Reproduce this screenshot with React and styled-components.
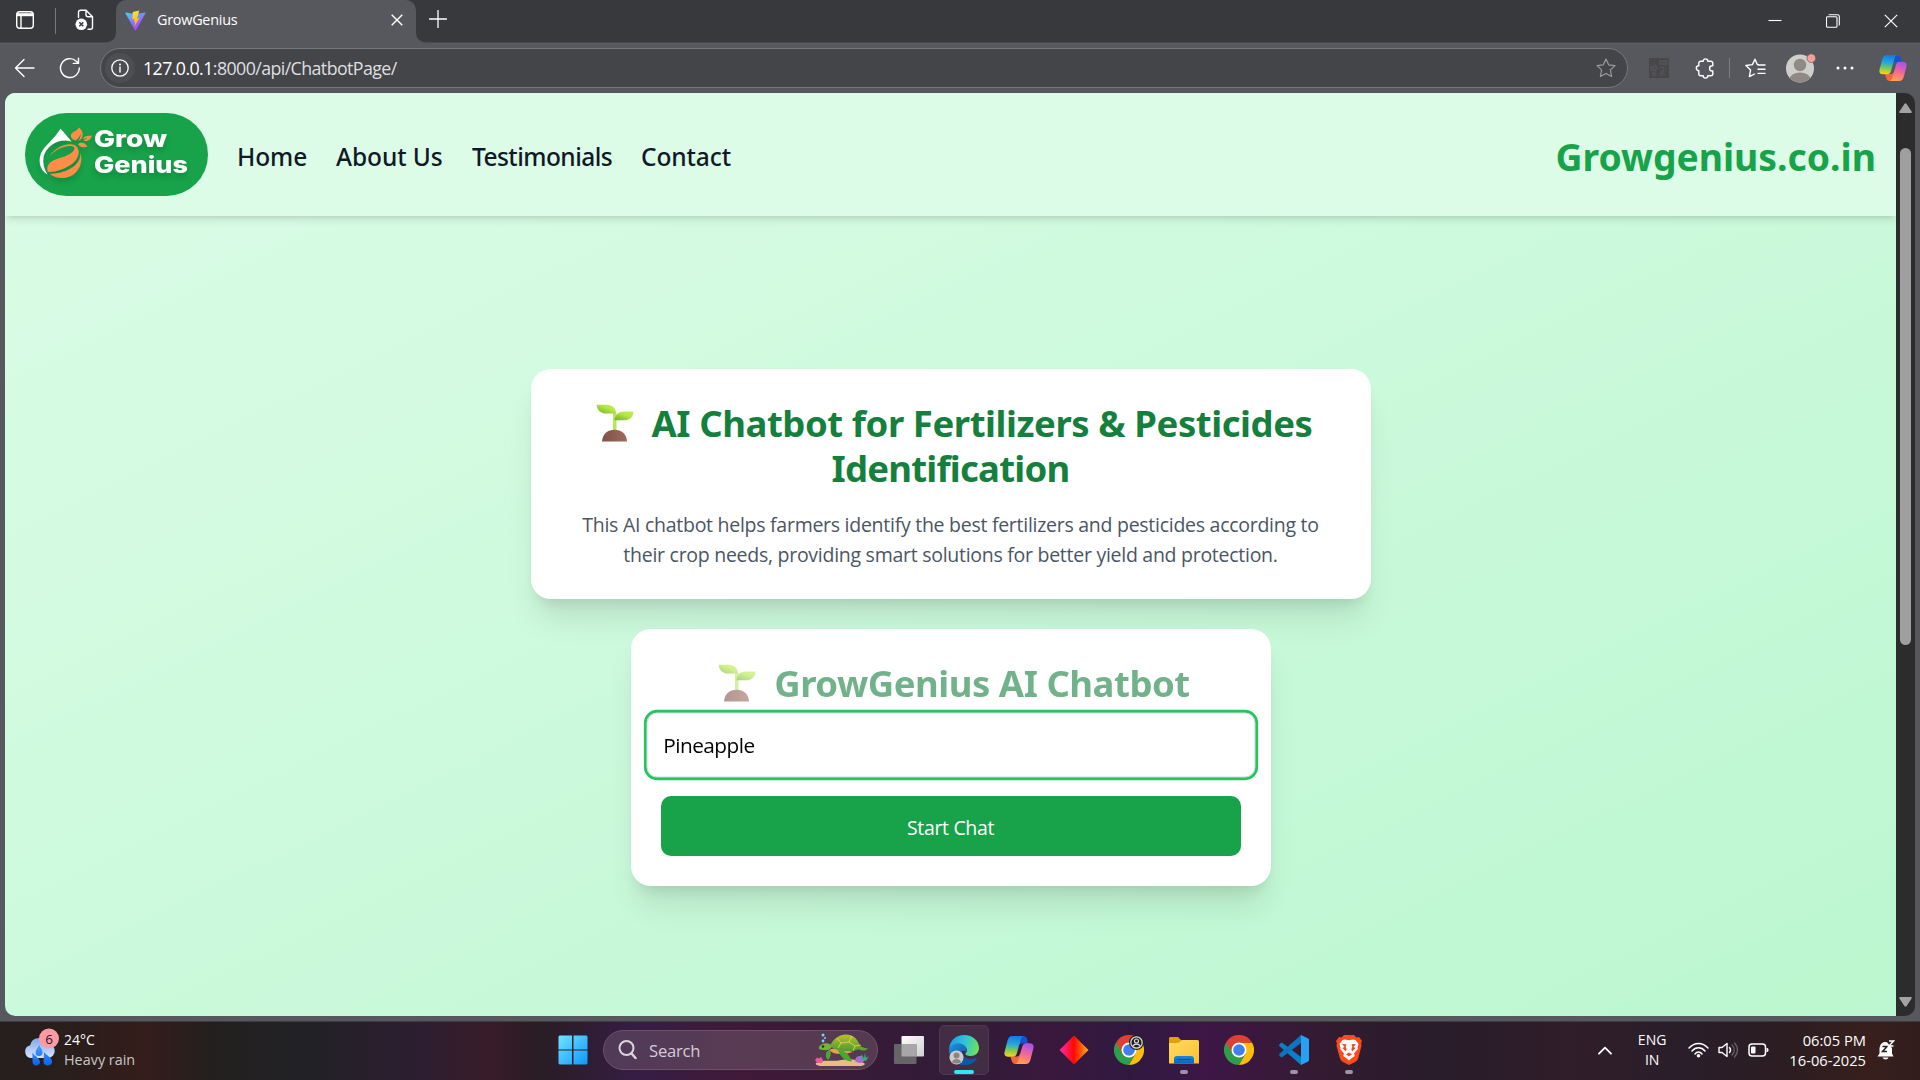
import React from "react";
import styled, { createGlobalStyle } from "styled-components";

const Global = createGlobalStyle`
  *, *::before, *::after { box-sizing: border-box; }
  html, body { margin: 0; padding: 0; background: #57585d; overflow: hidden; }
  body { font-family: "Open Sans", "Noto Sans", sans-serif; }
  svg { display: block; flex: none; }
`;

const Screen = styled.div`
  width: 1920px;
  height: 1080px;
  display: flex;
  flex-direction: column;
  overflow: hidden;
  background: #57585d;
`;

/* ---------- browser chrome ---------- */
const TabBar = styled.div`
  height: 43px;
  flex: none;
  display: flex;
  background: #38393d;
`;
const ToolsRule = styled.div`
  width: 1px;
  height: 26px;
  margin: 2px 19px 0 20px;
  background: #77787b;
`;
const ToolsGroup = styled.div`
  width: 116px;
  display: flex;
  align-items: center;
  padding: 0 0 2px 15px;
`;
const NewTab = styled.div`
  margin: 0 0 4px 13px;
`;
const Tab = styled.div`
  width: 300px;
  height: 43px;
  display: flex;
  align-items: center;
  padding: 0 13px 3px 9px;
  background: #57585d;
  border-radius: 10px 10px 0 0;
`;
const TabTitle = styled.div`
  flex: 1;
  margin: 0 0 2px 11px;
  font-size: 14.4px;
  letter-spacing: -0.25px;
  color: #fff;
`;
const TabUnder = styled.div`
  flex: ${(p) => (p.$grow ? 1 : "none")};
  background: #57585d;
  display: flex;
`;
const TabUnderInner = styled.div`
  flex: 1;
  display: flex;
  align-items: center;
  background: #38393d;
  border-bottom: 1px solid #4b4c50;
  border-bottom-left-radius: ${(p) => (p.$left ? "10px" : 0)};
  border-bottom-right-radius: ${(p) => (p.$left ? 0 : "10px")};
`;
const WindowButtons = styled.div`
  margin-left: auto;
  display: flex;
  align-items: center;
  gap: 44px;
  padding: 0 22px 0 0;
`;
const AddressRow = styled.div`
  height: 50px;
  flex: none;
  display: flex;
  align-items: center;
  padding: 0 13px 0 14px;
`;
const NavIcons = styled.div`
  display: flex;
  gap: 23px;
  margin-right: 19px;
`;
const AddressField = styled.div`
  width: 1528px;
  height: 40px;
  flex: none;
  display: flex;
  align-items: center;
  padding: 0 11px 0 4px;
  border: 1px solid #77787c;
  border-radius: 20px;
  background: #444549;
`;
const InfoDisc = styled.div`
  width: 30px;
  height: 30px;
  border-radius: 50%;
  display: grid;
  place-items: center;
  background: #4d4e52;
`;
const Url = styled.div`
  flex: 1;
  margin: 0 0 1px 8px;
  font-size: 17.8px;
  letter-spacing: -0.58px;
  color: #dfdfe0;
  b { font-weight: 400; color: #fff; }
`;
const ToolSlot = styled.div`
  margin-left: ${(p) => p.$ml}px;
`;
const ToolRule = styled.div`
  width: 1px;
  height: 20px;
  background: #7c7d80;
`;

/* ---------- page ---------- */
const Viewport = styled.div`
  height: 923px;
  flex: none;
  display: flex;
  margin: 0 5px 5px;
  border-radius: 10px;
  overflow: hidden;
  background: #2c2c2c;
`;
const Page = styled.div`
  width: 1891px;
  display: flex;
  flex-direction: column;
  background: linear-gradient(to bottom right, #dcfce7, #bbf7d0);
`;
const Header = styled.header`
  height: 123px;
  flex: none;
  display: flex;
  align-items: center;
  padding: 0 20px;
  background: #dcfce7;
  box-shadow: 0 5px 7.5px -1px rgba(0, 0, 0, 0.1), 0 2.5px 5px -2.5px rgba(0, 0, 0, 0.1);
`;
const LogoPill = styled.div`
  width: 183px;
  height: 83px;
  border-radius: 41.5px;
  background: #18a34a;
`;
const Nav = styled.nav`
  display: flex;
  gap: 30px;
  margin-left: 29px;
  padding-top: 3px;
`;
const NavLink = styled.a`
  width: ${(p) => p.$w}px;
  white-space: nowrap;
  font: 500 24.5px/35px "Noto Sans", sans-serif;
  letter-spacing: ${(p) => p.$ls || 0}px;
  color: #111827;
`;
const Brand = styled.div`
  margin-left: auto;
  padding-top: 4px;
  white-space: nowrap;
  font: 700 37.3px/45px "Noto Sans", sans-serif;
  color: #16a34a;
`;
const Main = styled.main`
  flex: 1;
  display: flex;
  flex-direction: column;
  align-items: center;
  gap: 30px;
  padding-top: 153px;
`;
const Card = styled.section`
  width: ${(p) => p.$w}px;
  padding: 30px;
  border-radius: 20px;
  background: #fff;
  text-align: center;
  box-shadow: 0 25px 31px -6px rgba(0, 0, 0, 0.1), 0 10px 12.5px -7.5px rgba(0, 0, 0, 0.1);
`;
const Title = styled.h1`
  margin: 0;
  font: 700 36.5px/45px "Noto Sans", sans-serif;
  white-space: nowrap;
  color: #15803d;
  opacity: ${(p) => (p.$faded ? 0.6 : 1)};
`;
const TitleLine = styled.span`
  height: 45px;
  display: flex;
  justify-content: center;
  align-items: center;
  gap: 18px;
  padding: 3px 0 0 ${(p) => (p.$icon ? 7 : 0)}px;
  letter-spacing: ${(p) => p.$ls}px;
`;
const Lead = styled.p`
  margin: 21px 0 -1px;
  font-size: 19.5px;
  line-height: 30px;
  letter-spacing: -0.27px;
  white-space: nowrap;
  color: #4b5563;
`;
const CropInput = styled.input`
  display: block;
  width: 580px;
  height: 62px;
  margin: 10px 0 20px;
  padding: 0 15px;
  border: 1px solid #d5d8dc;
  border-radius: 10px;
  outline: none;
  font: 400 19.8px "Open Sans", sans-serif;
  letter-spacing: -0.5px;
  color: #000;
  background: #fff;
  box-shadow: 0 0 0 2.5px #22c55e;
  transform: scale(1.05);
`;
const StartButton = styled.button`
  display: block;
  width: 580px;
  height: 60px;
  padding: 2px 0 0;
  border: 0;
  border-radius: 10px;
  font: 400 19.5px "Open Sans", sans-serif;
  letter-spacing: -0.34px;
  color: #fff;
  background: #18a34a;
`;
const Scrollbar = styled.div`
  width: 19px;
  display: flex;
  flex-direction: column;
  align-items: center;
  padding: 10px 0 9px;
`;
const Thumb = styled.div`
  width: 11px;
  height: 497px;
  margin: 35px 0 auto;
  border-radius: 6px;
  background: #9f9f9f;
`;

/* ---------- taskbar ---------- */
const Taskbar = styled.footer`
  height: 59px;
  flex: none;
  display: flex;
  align-items: center;
  padding-bottom: 2px;
  border-top: 1px solid #3f3b40;
  background: linear-gradient(90deg, #251f1d 0, #2a1e1c 80px, #351d1b 145px, #231f1e 210px, #222226 310px, #2d1e31 420px, #391c29 490px, #291d24 540px, #361d45 640px, #401a38 740px, #3a1a37 820px, #301c37 960px, #3a183d 1050px, #30193f 1130px, #3e1646 1210px, #331b31 1320px, #291c2b 1430px, #301e29 1570px, #2a1e2a 1680px, #2b1d22 1780px, #381f1d 1870px, #321d1d 1920px);
`;
const Weather = styled.div`
  width: 533px;
  display: flex;
  align-items: center;
  padding-left: 24px;
  gap: 5px;
`;
const WeatherBox = styled.div`
  margin-bottom: 7px;
`;
const Stack = styled.div`
  display: flex;
  flex-direction: column;
  align-items: ${(p) => p.$align || "flex-start"};
  font-size: ${(p) => p.$size || 14}px;
  line-height: 20px;
  white-space: nowrap;
  color: #fff;
`;
const Muted = styled.span`
  font-size: 14.4px;
  color: #c9c6c6;
`;
const AppRow = styled.div`
  display: flex;
  align-items: center;
`;
const StartSlot = styled.div`
  width: 62px;
  padding-left: 25px;
`;
const SearchBox = styled.div`
  width: 275px;
  height: 40px;
  margin: 0 3.5px 0 8px;
  display: flex;
  align-items: center;
  padding: 0 8px 0 14px;
  border: 1px solid #6d5269;
  border-radius: 20px;
  background: linear-gradient(90deg, #4f3a58, #5a3b54 50%, #553951);
`;
const SearchLabel = styled.div`
  flex: 1;
  margin-left: 12px;
  font-size: 16.6px;
  letter-spacing: -0.2px;
  color: #d5cbd5;
`;
const AppSlot = styled.div`
  width: 50px;
  height: 50px;
  margin: 0 2.5px;
  display: flex;
  flex-direction: column;
  align-items: center;
  padding-top: 9px;
  border-radius: 5px;
  border: 1px solid ${(p) => (p.$active ? "#4d3850" : "transparent")};
  background: ${(p) => (p.$active ? "#422d45" : "transparent")};
`;
const RunMark = styled.div`
  width: ${(p) => (p.$active ? 20 : 8)}px;
  height: 4px;
  margin-top: 5px;
  border-radius: 2px;
  background: ${(p) => (p.$active ? "#2de6f9" : "#a093a4")};
`;
const Tray = styled.div`
  flex: 1;
  display: flex;
  align-items: center;
  justify-content: flex-end;
  padding-right: 25px;
`;
const LangBox = styled.div`
  margin-left: 26px;
`;
const TrayIcons = styled.div`
  display: flex;
  align-items: center;
  gap: 9px;
  margin: 0 20px 0 22px;
`;
const ClockBox = styled.div`
  margin-right: 11px;
`;

/* ---------- drawings ---------- */
const line = { fill: "none", stroke: "#fff", strokeWidth: 1.4, strokeLinecap: "round", strokeLinejoin: "round" };

const WorkspaceIcon = () => (
  <svg width="20" height="20" viewBox="0 0 20 20">
    <rect x="1.700" y="1.700" width="16.600" height="16.600" rx="3" {...line} />
    <path d="M2 3.200h16v3H2z" fill="#fff" />
    <path d="M6 6V18" {...line} />
  </svg>
);
const TabActionsIcon = () => (
  <svg width="19" height="22" viewBox="0 0 19 22">
    <path d="M3.500 8.500V3.200a2 2 0 0 1 2-2H11l6.500 6.500v10.500a2 2 0 0 1-2 2H13" {...line} />
    <path d="M11 1.500v4.200a2 2 0 0 0 2 2h4.400" {...line} />
    <circle cx="6.300" cy="15.300" r="5.800" fill="#fff" />
    <path d="M4.300 13.300l4 4m0-4l-4 4" stroke="#38393d" strokeWidth="1.500" />
  </svg>
);
const ViteIcon = () => (
  <svg width="21" height="21" viewBox="0 0 21 21">
    <defs>
      <linearGradient id="vt" x1="0" y1="0" x2=".6" y2="1"><stop stopColor="#41d1ff" /><stop offset="1" stopColor="#bd34fe" /></linearGradient>
      <linearGradient id="vb" x1=".4" y1="0" x2=".6" y2="1"><stop stopColor="#ffea83" /><stop offset=".1" stopColor="#ffdd35" /><stop offset="1" stopColor="#ffa800" /></linearGradient>
    </defs>
    <path d="M20.400 3.400L11 20.200a.7.7 0 0 1-1 0L.5 3.400c-.3-.4.1-.9.6-.8l9.400 1.600 9.300-1.600c.5-.1.9.4.6.8z" fill="url(#vt)" />
    <path d="M14.300.6L7.800 1.900l-.5 7.300 2.200-.3-.6 3.200 1.300-.3-.8 4.800L14.600 8l-2.600.5.9-3.100z" fill="url(#vb)" />
  </svg>
);
const CloseIcon = ({ size = 12, w = 1.4 }) => (
  <svg width={size} height={size} viewBox="0 0 12 12"><path d="M.7.7l10.600 10.600M11.300.7L.7 11.300" stroke="#fff" strokeWidth={w} /></svg>
);
const PlusIcon = () => (
  <svg width="18" height="18" viewBox="0 0 18 18"><path d="M9 .5v17M.5 9h17" {...line} strokeWidth="1.300" /></svg>
);
const MinIcon = () => (<svg width="14" height="14" viewBox="0 0 14 14"><path d="M.5 6.500h13" stroke="#fff" strokeWidth="1.100" /></svg>);
const RestoreIcon = () => (
  <svg width="14" height="14" viewBox="0 0 14 14"><rect x=".5" y="2.800" width="10.500" height="10.500" rx="1" {...line} strokeWidth="1.100" /><path d="M3 .7h8.500a1.800 1.800 0 0 1 1.800 1.800V11" {...line} strokeWidth="1.100" /></svg>
);
const BackIcon = () => (<svg width="22" height="22" viewBox="0 0 22 22"><path d="M20 11H1.500M10 2.500L1.500 11l8.500 8.500" {...line} /></svg>);
const ReloadIcon = () => (<svg width="22" height="22" viewBox="0 0 22 22"><path d="M20.300 11a9.400 9.400 0 1 1-3-6.800l2 1.900M19.500 1.200v5.200h-5.200" {...line} /></svg>);
const InfoIcon = () => (<svg width="18" height="18" viewBox="0 0 18 18"><circle cx="9" cy="9" r="8.200" {...line} strokeWidth="1.300" /><path d="M9 8v5" {...line} /><circle cx="9" cy="5.400" r="1" fill="#fff" /></svg>);
const StarIcon = () => (<svg width="20" height="20" viewBox="0 0 20 20"><path d="M10 1l2.700 5.800 6.300.8-4.600 4.300 1.200 6.600L10 15.400l-5.600 3.100 1.200-6.600L1 7.600l6.300-.8z" {...line} stroke="#9b9b9d" strokeWidth="1.200" /></svg>);
const DimExtension = () => (
  <svg width="20" height="20" viewBox="0 0 20 20"><rect width="20" height="20" fill="#48484a" /><path d="M11 3h7v3h-7zM2 9h3v3H2zm4-2l2 3-2 3M3 14l4 4m0-4l-4 4M11 10c4-2 5 1 3 3s1 4 3 3m-5-3v5" fill="none" stroke="#555556" strokeWidth="1.300" /></svg>
);
const PuzzleIcon = () => (
  <svg width="19" height="21" viewBox="0 0 19 21"><path d="M5.800 3.200h2.400a2.300 2.300 0 0 1 4.600 0h3a2 2 0 0 1 2 2v2.600h-.6a2.600 2.600 0 0 0 0 5.200h.6v2.800a2 2 0 0 1-2 2h-3a2.300 2.300 0 0 1-4.600 0H5.800a2 2 0 0 1-2-2v-3a2.500 2.500 0 0 1 0-5V5.200a2 2 0 0 1 2-2z" {...line} /></svg>
);
const FavIcon = () => (
  <svg width="21" height="20" viewBox="0 0 21 20"><path d="M13.500 6.800L12.300 6.500 10 1.200 7.400 6.600.9 7.500l4.700 4.400-1.200 6.700 5-2.600M13.500 7h6.500M13 11.200h7M13 15.400h7" {...line} /></svg>
);
const Avatar = () => (
  <svg width="30" height="30" viewBox="0 0 30 30"><defs><clipPath id="av"><circle cx="14" cy="15.500" r="14" /></clipPath></defs><circle cx="14" cy="15.500" r="14" fill="#d0ceca" /><circle cx="14" cy="12" r="6.200" fill="#8f8a85" /><ellipse cx="14" cy="26.500" rx="10.500" ry="7" fill="#8f8a85" clipPath="url(#av)" /><circle cx="25.300" cy="5.200" r="4.300" fill="#ff9d9b" stroke="#68696c" strokeWidth=".8" /></svg>
);
const DotsIcon = () => (<svg width="18" height="4" viewBox="0 0 18 4"><g fill="#fff"><circle cx="2" cy="2" r="1.500" /><circle cx="9" cy="2" r="1.500" /><circle cx="16" cy="2" r="1.500" /></g></svg>);
const Copilot = ({ id, size = 28 }) => (
  <svg width={size} height={size} viewBox="0 0 28 28">
    <defs>
      <linearGradient id={id + "a"} x1=".4" y1="0" x2=".3" y2="1"><stop stopColor="#1778e8" /><stop offset=".4" stopColor="#25a9d8" /><stop offset=".7" stopColor="#83cb50" /><stop offset="1" stopColor="#ffd21c" /></linearGradient>
      <linearGradient id={id + "b"} x1=".7" y1="0" x2=".4" y2="1"><stop stopColor="#a452ef" /><stop offset=".5" stopColor="#f0669b" /><stop offset="1" stopColor="#ffa24b" /></linearGradient>
    </defs>
    <path d="M14 1h4c2 0 3 1 3.500 2.500L22.500 8H17c-2 0-3 1-3.500 3z" fill="#1554ce" />
    <path d="M14 27h-3.500c-1.600 0-2.700-1-3.200-2.500L6 20h6c1.600 0 2.500-1 3-3z" fill="#f26541" />
    <path d="M7.500 1H19c-1.800 0-2.800 1.200-3.400 3.200L12 17c-.7 2.300-1.800 3.300-3.800 3.300H4c-3 0-4.200-2-3.400-5L3.400 5C4.200 2.300 5.500 1 7.500 1z" fill={`url(#${id}a)`} />
    <path d="M20.500 27H10c1.700 0 2.700-1.200 3.300-3.200L17 11c.6-2.200 1.700-3.300 3.700-3.300H24c3 0 4.200 2 3.400 5L24.700 23c-.8 2.800-2.200 4-4.200 4z" fill={`url(#${id}b)`} />
  </svg>
);
const Logo = () => (
  <svg width="183" height="83" viewBox="0 0 183 83">
    <defs><filter id="ls" x="-20%" y="-20%" width="140%" height="150%"><feDropShadow dx="0" dy="4" stdDeviation="3" floodColor="#0a5c28" floodOpacity=".35" /></filter></defs>
    <g filter="url(#ls)">
      <path d="M35.500 15.500L46.500 28.500C34 24.500 21 33 18.500 44c-1 6 .5 12 4 17.500C14 57 12.500 45 17.500 37.500 21 32 30 25 35.500 15.500z" fill="#fff" />
      <path d="M49.500 36C46 44 33 44 26 49c-3.500 2.500-4.500 6-3 10 10 0 22-5 27-11 3-3.500 4.500-8 3-12-1-2.500-2.500-3.500-4-4C43 29.500 31 33.500 24.500 43c6-6.500 14-10 20-10 4 0 5.500 1 5 3z" fill="#ff8d47" />
      <path d="M55.500 40c.5 11-11 20-30.500 21C30 65 37 65.800 43 64c9-2.500 15.500-12 12.500-24z" fill="#ff8d47" />
      <path d="M54 14.500c4.500 3.500 5 9.500 1 12.500l-1.500.5c2-2.500 2.500-5 2-7-.5 3-2.500 5.500-5 7-3.500-1-5-3-4.500-5.500.5-3.500 6-3.500 8-7.500zM67 22.800c-2 4.700-5 6.200-8.500 4.700l4-2.500-4.800 1C59 23 62.500 22.300 67 22.800zM53 31c4-2.500 7-.5 9.500 2.500-3.500 1.500-7.500 1-9.500-2.500z" fill="#ff8d47" />
      <g fill="#fff" fontFamily="Inter, sans-serif" fontWeight="800" fontSize="22.500">
        <text x="69" y="34" textLength="73" lengthAdjust="spacingAndGlyphs">Grow</text>
        <text x="69" y="60.300" textLength="94" lengthAdjust="spacingAndGlyphs">Genius</text>
      </g>
    </g>
  </svg>
);
const Sprout = ({ id }) => (
  <svg width="38" height="38" viewBox="0 0 38 38">
    <defs>
      <linearGradient id={id + "l"} x1="0" y1="1" x2="1" y2="0"><stop stopColor="#6fae2c" /><stop offset=".6" stopColor="#b5e844" /><stop offset="1" stopColor="#bdf04b" /></linearGradient>
      <linearGradient id={id + "s"} x1="0" x2="1" y1="0" y2="0"><stop stopColor="#7f5148" /><stop offset="1" stopColor="#a06a60" /></linearGradient>
    </defs>
    <path d="M17 9h3.500v18H17z" fill="#b4ea55" />
    <path d="M.5.7H10c6 0 9.500 3.300 10.300 8.800H11C4.500 9.500 1.300 6.500.5.7z" fill={`url(#${id}l)`} />
    <path d="M37.500 7.500C37 13.500 33.500 16.300 28 16.300h-9.500c.5-5.800 4-8.800 10-8.800z" fill={`url(#${id}l)`} />
    <path d="M6 37.500C6.500 30 11.500 25.700 18.500 25.700S30.700 30 31 37.500z" fill={`url(#${id}s)`} />
  </svg>
);
const Arrow = ({ down }) => (
  <svg width="13" height="10" viewBox="0 0 13 10"><path d={down ? "M1.200 0h10.600c1 0 1.300.8.8 1.500L7.600 9c-.6.9-1.600.9-2.200 0L.4 1.500C-.1.8.2 0 1.200 0z" : "M1.200 10h10.600c1 0 1.300-.8.8-1.500L7.600 1c-.6-.9-1.600-.9-2.200 0L.4 8.500c-.5.7-.2 1.500.8 1.500z"} fill="#a3a3a3" /></svg>
);
const WeatherIcon = () => (
  <svg width="35" height="38" viewBox="0 0 35 38">
    <defs>
      <linearGradient id="wc" x1="0" y1="0" x2="0" y2="1"><stop stopColor="#7fa8ee" /><stop offset="1" stopColor="#d9e4fb" /></linearGradient>
      <linearGradient id="wd" x1="0" y1="0" x2="0" y2="1"><stop stopColor="#48a0ff" /><stop offset="1" stopColor="#0a62ee" /></linearGradient>
    </defs>
    <path d="M7 30a6.500 6.500 0 0 1-.8-12.800A9 9 0 0 1 23.500 16a7 7 0 0 1 .5 14z" fill="url(#wc)" />
    <path d="M15 17c2.400 4 3.700 5.500 3.500 7.500a3.500 3.500 0 0 1-7 0c0-2 2-4 3.500-7.500zM8.500 24.500c2 3.500 7.500 6 7.500 9.500 0 4.500-7.500 4.500-7.500 0zM20 24c3 4 9 6 8 10.500-.8 4-8 4-8.500 0z" fill="url(#wd)" />
    <circle cx="25" cy="10.500" r="10" fill="#ff99a4" />
    <text x="25" y="15.500" textAnchor="middle" fontFamily="Open Sans, sans-serif" fontSize="13.500" fill="#1b1a1a">6</text>
  </svg>
);
const Windows = () => (
  <svg width="30" height="30" viewBox="0 0 30 30"><defs><linearGradient id="wn" gradientUnits="userSpaceOnUse" x1="0" y1="0" x2="30" y2="30"><stop stopColor="#70e7ff" /><stop offset="1" stopColor="#0f94fb" /></linearGradient></defs><path d="M1.500.5h12.500v14H.5v-13zM15.500.5h13l1 1v13h-14zM.5 15.500h13.500v14H1.500l-1-1zM15.500 15.500h14v13l-1 1h-13z" fill="url(#wn)" /></svg>
);
const SearchIcon = () => (<svg width="19" height="20" viewBox="0 0 19 20"><circle cx="8.500" cy="8" r="7" fill="none" stroke="#ddd3dd" strokeWidth="2" /><path d="M13.500 13.500l4 4.500" stroke="#ddd3dd" strokeWidth="2.500" strokeLinecap="round" /></svg>);
const Turtle = () => (
  <svg width="55" height="34" viewBox="0 0 55 34">
    <defs><linearGradient id="tt" x1="0" y1="0" x2="0" y2="1"><stop stopColor="#b9bf2e" /><stop offset="1" stopColor="#4d9b32" /></linearGradient></defs>
    <path d="M2 30c8-4 15-1 25-3s16 0 23 3c2 1 0 3-5 3H8c-5 0-7-2-6-3z" fill="#e8bd83" />
    <path d="M43 12c4 1 6 3 11 3.500-3 3.500-8 2-12-.5z" fill="#58a82f" />
    <path d="M15 17c8-4 16 0 24 2l-8 2c-8 0-12 0-16-4z" fill="#e6a24a" />
    <path d="M16 13C20 4 28 0 36 2c7 2 9 8 11 13-8 5-24 4-31-2z" fill="url(#tt)" />
    <path d="M23 5l4 5 8-1 3-6M27 10l-3 5M35 9l6 4-2 5M41 13l6-1" stroke="#dfd64d" strokeWidth=".9" fill="none" />
    <path d="M5 14c2-4 9-5 12-2 2 3-2 6-7 5-4 0-6-1-5-3z" fill="#76b238" /><circle cx="9" cy="13.500" r="1.200" fill="#18370f" />
    <path d="M24 17c8 0 12 6 14 11.500-6 0-12-4.500-14-11.500zM15 17c3 2 2 7-1 10-3-3-3-8 1-10z" fill="#48a832" />
    <g fill="#7ed2ee"><circle cx="9" cy="2" r="1.500" /><circle cx="11" cy="5" r="1" /><circle cx="9" cy="8" r="1.400" /></g>
    <path d="M1 27l2-2.500 2 1 2-1.500 2 3-1 3H3z" fill="#ee569f" /><path d="M41 28c0-4 3-5 5-5s5 2 4 5-8 2-9 0z" fill="#a86bd0" /><path d="M48 27l-1-6 3 4 1-5 1 5 3-2-3 5z" fill="#2fae81" />
  </svg>
);
const TaskView = () => (
  <svg width="30" height="30" viewBox="0 0 30 30"><defs><linearGradient id="tv" x1="0" y1="0" x2="1" y2="1"><stop stopColor="#fff" /><stop offset="1" stopColor="#cfcfcf" /></linearGradient></defs><rect x="7.500" y="1" width="22.500" height="20.500" rx="1" fill="url(#tv)" /><rect x="0" y="9" width="22.500" height="20" rx="1" fill="#666467" /><rect x="7.500" y="9" width="15" height="12.500" fill="#a7a6a8" /></svg>
);
const Edge = () => (
  <svg width="30" height="30" viewBox="0 0 30 30">
    <defs>
      <linearGradient id="eg" x1="0" y1=".4" x2="1" y2=".6"><stop stopColor="#1c9ee8" /><stop offset=".5" stopColor="#31c4d6" /><stop offset="1" stopColor="#6de554" /></linearGradient>
      <linearGradient id="eb" x1="0" y1="0" x2="1" y2="1"><stop stopColor="#2194e0" /><stop offset="1" stopColor="#0c4ea5" /></linearGradient>
    </defs>
    <path d="M0 14c1 9 7 16 16 16 5 0 9-2 11.500-5.500.6-1-.3-1.600-1.200-1.200-6 2.600-12 0-13-5L13 9z" fill="#0c59a4" />
    <path d="M0 14C2 8 8 7 12 8c5 1 7 5 5 8-2 1-4-1-5 1-1 4 2 9 6 12C8 32 0 25 0 14z" fill="url(#eb)" />
    <path d="M0 14C1 5 7 0 15 0c9 0 15 6 15 13 0 5-4 8-8 8-4 0-6-1-5.500-2.500C19 16 18 13 16 11 11 6 3 8 0 14z" fill="url(#eg)" />
    <circle cx="7.500" cy="22.500" r="7" fill="#cfccc8" /><circle cx="7.500" cy="20.500" r="3" fill="#8a8580" /><path d="M3 27c1-4 8-4 9 0-2 2-7 2-9 0z" fill="#8a8580" />
  </svg>
);
const Diamond = () => (
  <svg width="30" height="30" viewBox="0 0 30 30"><defs><linearGradient id="dm" x1="0" x2="1" y1="0" y2="0"><stop stopColor="#ff2bb0" /><stop offset=".5" stopColor="#ff0800" /><stop offset="1" stopColor="#ffb01a" /></linearGradient></defs><path d="M15 .5L29.500 15 15 29.500.5 15z" fill="url(#dm)" /></svg>
);
const Chrome = ({ badge }) => (
  <svg width="30" height="30" viewBox="0 0 30 30">
    <path d="M15 15H13L2 7.500A15 15 0 0 0 15 30l6.500-11.300z" fill="#2d9e4b" />
    <path d="M15 7.500h13A15 15 0 0 1 15 30l6.500-11.300z" fill="#fbbc0e" />
    <path d="M15 7.500h13A15 15 0 0 0 2 7.500l6.500 11.200z" fill="#dc4133" />
    <circle cx="15" cy="15" r="7.500" fill="#fff" /><circle cx="15" cy="15" r="5.800" fill="#3f7fee" />
    {badge && <g><circle cx="22.500" cy="7.500" r="7.500" fill="#222" /><circle cx="22.500" cy="7.500" r="5.700" fill="none" stroke="#ddd" strokeWidth="1.200" /><circle cx="22.500" cy="6" r="2" fill="none" stroke="#ddd" strokeWidth="1.100" /><path d="M19 11c1-2.500 6-2.500 7 0" fill="none" stroke="#ddd" strokeWidth="1.200" /></g>}
  </svg>
);
const Folder = () => (
  <svg width="30" height="30" viewBox="0 0 30 30"><defs><linearGradient id="fo" x1="0" y1="0" x2="1" y2="1"><stop stopColor="#ffdb63" /><stop offset="1" stopColor="#fbc02f" /></linearGradient><linearGradient id="fb" x1="0" y1="0" x2="0" y2="1"><stop stopColor="#1588dd" /><stop offset="1" stopColor="#0a64bd" /></linearGradient></defs><path d="M0 3.500C0 2.500.7 2 1.500 2H9l3 3h16v8H0z" fill="#e2a20c" /><path d="M0 8h9.500L13 5h15.500A1.500 1.500 0 0 1 30 6.500v22H0z" fill="url(#fo)" /><path d="M5 28.500V24a3 3 0 0 1 3-3h14a3 3 0 0 1 3 3v4.500z" fill="url(#fb)" /><path d="M8.500 24.500h13" stroke="#07529d" strokeWidth="1.200" strokeLinecap="round" /></svg>
);
const VSCode = () => (
  <svg width="30" height="30" viewBox="0 0 30 30">
    <path d="M22 30L.6 11.300c-.7-.6-.7-1.400 0-2l1.300-1.200c.5-.4 1.100-.4 1.600 0L24 23.500z" fill="#0b80c9" />
    <path d="M22 0L.6 18.700c-.7.6-.7 1.400 0 2l1.300 1.200c.5.4 1.100.4 1.600 0L24 6.500z" fill="#0f74c0" />
    <path d="M22 0l6.800 3.200c.8.400 1.200 1 1.200 1.800v20c0 .8-.4 1.400-1.200 1.800L22 30z" fill="#27a2f1" />
  </svg>
);
const Brave = () => (
  <svg width="26" height="30" viewBox="0 0 26 30"><path d="M8 0h10l2.500 2.500L23 2l3 4-1 2.500.6 2-3.500 13c-.5 1.600-1.500 2.600-3 3.500L13 30l-6-3c-1.500-.9-2.500-2-3-3.500L.4 10.500l.6-2L0 6l3-4 2.500.5z" fill="#fb4a1d" /><path d="M9 4.500l4 .8 4-.8 2.500.5 3 4-1 3.500.3 1.500-3.800 4.500.8 2.500-3 2L13 25.500 10.200 23l-3-2 .8-2.500L4.200 14l.3-1.500-1-3.500 3-4z" fill="#fff" /><path d="M6 9l4.500.2-.8 2.500 1 2.800-1.200 1.800L6.500 13l2-1zM20 9l-4.500.2.8 2.500-1 2.800 1.200 1.800 3-3.300-2-1zM13 17.500l-3 1.700 3 2.300 3-2.300z" fill="#f04a1d" /></svg>
);
const Chevron = () => (<svg width="14" height="9" viewBox="0 0 14 9"><path d="M1 7.700L7 1.700l6 6" {...line} strokeWidth="1.800" /></svg>);
const Wifi = () => (
  <svg width="21" height="16" viewBox="0 0 21 16"><path d="M1 6c5.500-6 13.500-6 19 0M4 9c3.700-4.300 9.300-4.300 13 0M7 12c2-2.600 5-2.600 7 0" {...line} strokeWidth="1.500" /><circle cx="10.500" cy="13.700" r="1.800" fill="#fff" /></svg>
);
const Volume = () => (
  <svg width="21" height="16" viewBox="0 0 21 16"><path d="M1 5.500h3l5-4v13l-5-4H1z" {...line} /><path d="M11.500 5.500c1.300 1.500 1.300 3.500 0 5" {...line} /><path d="M14 3c3 3 3 7 0 10M16.500 1c4 4 4 10 0 14" {...line} stroke="#695f64" /></svg>
);
const Battery = () => (
  <svg width="21" height="14" viewBox="0 0 21 14"><rect x="1" y="1" width="16.500" height="12" rx="3" {...line} strokeWidth="1.500" /><rect x="3" y="3.500" width="4.500" height="7" rx="1" fill="#fff" /><path d="M18.500 5h.8c1.600 0 1.600 4 0 4h-.8z" fill="#fff" /></svg>
);
const Bell = () => (
  <svg width="18" height="20" viewBox="0 0 18 20"><path d="M2.500 13.500V8a6 6 0 0 1 7.500-5.800L15 8v5.500l1.500 3H.5z" fill="#fff" /><path d="M5.500 17.500h6c-.8 2.500-5.200 2.500-6 0z" fill="#fff" /><path d="M5.500 6.500h4.500l-4.500 5H10" fill="none" stroke="#2c1d20" strokeWidth="1.500" /><path d="M12 1h4.500L12 6h4.500" fill="none" stroke="#fff" strokeWidth="1.500" /></svg>
);

const tools = [
  { ml: 21, icon: <DimExtension /> },
  { ml: 26, icon: <PuzzleIcon /> },
  { ml: 15, icon: <ToolRule /> },
  { ml: 15, icon: <FavIcon /> },
  { ml: 20, icon: <Avatar /> },
  { ml: 20, icon: <DotsIcon /> },
  { ml: 25, icon: <Copilot id="cb" /> },
];

const apps = [
  { icon: <TaskView /> },
  { icon: <Edge />, active: true, running: true },
  { icon: <Copilot id="ct" size={30} /> },
  { icon: <Diamond /> },
  { icon: <Chrome badge /> },
  { icon: <Folder />, running: true },
  { icon: <Chrome /> },
  { icon: <VSCode />, running: true },
  { icon: <Brave />, running: true },
];

export default function App() {
  return (
    <Screen>
      <Global />
      <TabBar>
        <TabUnder>
          <TabUnderInner>
            <ToolsGroup>
              <WorkspaceIcon />
              <ToolsRule />
              <TabActionsIcon />
            </ToolsGroup>
          </TabUnderInner>
        </TabUnder>
        <Tab>
          <ViteIcon />
          <TabTitle>GrowGenius</TabTitle>
          <CloseIcon />
        </Tab>
        <TabUnder $grow>
          <TabUnderInner $left>
            <NewTab><PlusIcon /></NewTab>
            <WindowButtons>
              <MinIcon />
              <RestoreIcon />
              <CloseIcon size={14} w={1} />
            </WindowButtons>
          </TabUnderInner>
        </TabUnder>
      </TabBar>
      <AddressRow>
        <NavIcons><BackIcon /><ReloadIcon /></NavIcons>
        <AddressField>
          <InfoDisc><InfoIcon /></InfoDisc>
          <Url><b>127.0.0.1</b>:8000/api/ChatbotPage/</Url>
          <StarIcon />
        </AddressField>
        {tools.map((t, i) => (
          <ToolSlot key={i} $ml={t.ml}>{t.icon}</ToolSlot>
        ))}
      </AddressRow>
      <Viewport>
        <Page>
          <Header>
            <LogoPill><Logo /></LogoPill>
            <Nav>
              <NavLink $w={69} $ls={-0.1}>Home</NavLink>
              <NavLink $w={106} $ls={-0.1}>About Us</NavLink>
              <NavLink $w={139} $ls={-0.55}>Testimonials</NavLink>
              <NavLink $w={88} $ls={-0.1}>Contact</NavLink>
            </Nav>
            <Brand>Growgenius.co.in</Brand>
          </Header>
          <Main>
            <Card $w={840}>
              <Title>
                <TitleLine $icon $ls={-0.43}><Sprout id="s1" /><span>AI Chatbot for Fertilizers &amp; Pesticides</span></TitleLine>
                <TitleLine $ls={-0.75}>Identification</TitleLine>
              </Title>
              <Lead>
                This AI chatbot helps farmers identify the best fertilizers and pesticides according to
                <br />
                their crop needs, providing smart solutions for better yield and protection.
              </Lead>
            </Card>
            <Card $w={640}>
              <Title $faded><TitleLine $icon $ls={-0.47}><Sprout id="s2" /><span>GrowGenius AI Chatbot</span></TitleLine></Title>
              <CropInput defaultValue="Pineapple" />
              <StartButton>Start Chat</StartButton>
            </Card>
          </Main>
        </Page>
        <Scrollbar><Arrow /><Thumb /><Arrow down /></Scrollbar>
      </Viewport>
      <Taskbar>
        <Weather>
          <WeatherBox><WeatherIcon /></WeatherBox>
          <Stack><span>24°C</span><Muted>Heavy rain</Muted></Stack>
        </Weather>
        <AppRow>
          <StartSlot><Windows /></StartSlot>
          <SearchBox><SearchIcon /><SearchLabel>Search</SearchLabel><Turtle /></SearchBox>
          {apps.map((a, i) => (
            <AppSlot key={i} $active={a.active}>
              {a.icon}
              {a.running && <RunMark $active={a.active} />}
            </AppSlot>
          ))}
        </AppRow>
        <Tray>
          <Chevron />
          <LangBox><Stack $align="center"><span>ENG</span><span>IN</span></Stack></LangBox>
          <TrayIcons><Wifi /><Volume /><Battery /></TrayIcons>
          <ClockBox><Stack $align="flex-end" $size={14.7}><span>06:05 PM</span><span>16-06-2025</span></Stack></ClockBox>
          <Bell />
        </Tray>
      </Taskbar>
    </Screen>
  );
}
